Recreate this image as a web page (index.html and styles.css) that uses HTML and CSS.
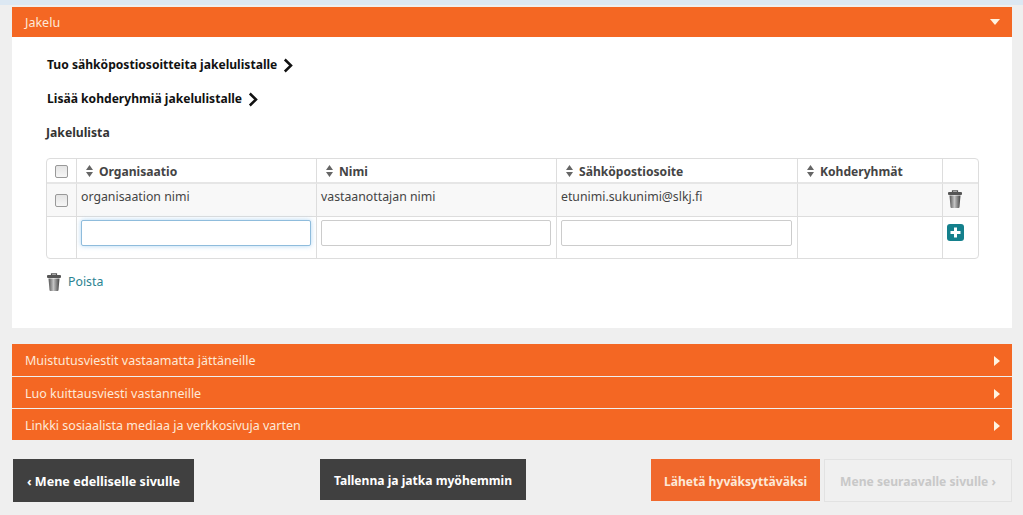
FILE: index.html
```html
<!DOCTYPE html>
<html>
<head>
    <meta charset="UTF-8">
    <title>Jakelu</title>
    <link rel="stylesheet" href="styles.css">
</head>
<body>
    <div class="top-strip"></div>
    <div class="page">
        <div class="bar bar-open">
            <span>Jakelu</span>
            <svg class="caret" width="10" height="6" viewBox="0 0 10 6"><path d="M0 0h10L5 6z"/></svg>
        </div>
        <div class="panel">
            <a class="link-head link-first">Tuo sähköpostiosoitteita jakelulistalle
                <svg class="chevron" width="10" height="15" viewBox="0 0 10 15"><path d="M1.800 1.500 8 7.500l-6.200 6" /></svg>
            </a>
            <a class="link-head link-second">Lisää kohderyhmiä jakelulistalle
                <svg class="chevron" width="10" height="15" viewBox="0 0 10 15"><path d="M1.800 1.500 8 7.500l-6.200 6" /></svg>
            </a>
            <h4>Jakelulista</h4>
            <table class="list">
                <colgroup>
                    <col class="col-check">
                    <col class="col-org">
                    <col class="col-name">
                    <col class="col-mail">
                    <col class="col-group">
                    <col class="col-action">
                </colgroup>
                <thead>
                    <tr>
                        <th class="cell-check"><span class="checkbox"></span></th>
                        <th><svg class="sort" width="7" height="12" viewBox="0 0 7 12"><path d="M3.500 0 7 5H0zM0 7h7l-3.500 5z"/></svg>Organisaatio</th>
                        <th><svg class="sort" width="7" height="12" viewBox="0 0 7 12"><path d="M3.500 0 7 5H0zM0 7h7l-3.500 5z"/></svg>Nimi</th>
                        <th><svg class="sort" width="7" height="12" viewBox="0 0 7 12"><path d="M3.500 0 7 5H0zM0 7h7l-3.500 5z"/></svg>Sähköpostiosoite</th>
                        <th><svg class="sort" width="7" height="12" viewBox="0 0 7 12"><path d="M3.500 0 7 5H0zM0 7h7l-3.500 5z"/></svg>Kohderyhmät</th>
                        <th></th>
                    </tr>
                </thead>
                <tbody>
                    <tr class="row-data">
                        <td class="cell-check"><span class="checkbox"></span></td>
                        <td>organisaation nimi</td>
                        <td>vastaanottajan nimi</td>
                        <td>etunimi.sukunimi@slkj.fi</td>
                        <td></td>
                        <td class="cell-action">
                            <svg class="trash" width="16" height="18" viewBox="0 0 16 18"><use href="#trash-icon"/></svg>
                        </td>
                    </tr>
                    <tr class="row-input">
                        <td></td>
                        <td><input type="text" class="focused"></td>
                        <td><input type="text"></td>
                        <td><input type="text"></td>
                        <td></td>
                        <td class="cell-action cell-add">
                            <svg class="add" width="17" height="17" viewBox="0 0 17 17"><rect width="17" height="17" rx="3" fill="#14808c"/><path d="M8.500 3.500v10M3.500 8.500h10" stroke="#fff" stroke-width="3"/></svg>
                        </td>
                    </tr>
                </tbody>
            </table>
            <div class="remove">
                <svg class="trash" width="16" height="18" viewBox="0 0 16 18"><use href="#trash-icon"/></svg>
                <a>Poista</a>
            </div>
        </div>

        <div class="bars">
            <div class="bar bar-tall"><span>Muistutusviestit vastaamatta jättäneille</span><svg class="caret" width="6" height="10" viewBox="0 0 6 10"><path d="M0 0l6 5-6 5z"/></svg></div>
            <div class="bar"><span>Luo kuittausviesti vastanneille</span><svg class="caret" width="6" height="10" viewBox="0 0 6 10"><path d="M0 0l6 5-6 5z"/></svg></div>
            <div class="bar"><span>Linkki sosiaalista mediaa ja verkkosivuja varten</span><svg class="caret" width="6" height="10" viewBox="0 0 6 10"><path d="M0 0l6 5-6 5z"/></svg></div>
        </div>

        <div class="actions">
            <button type="button" class="btn btn-dark btn-prev">‹ Mene edelliselle sivulle</button>
            <button type="button" class="btn btn-dark btn-save">Tallenna ja jatka myöhemmin</button>
            <div class="actions-right">
                <button type="button" class="btn btn-orange">Lähetä hyväksyttäväksi</button>
                <button type="button" class="btn btn-disabled">Mene seuraavalle sivulle ›</button>
            </div>
        </div>
    </div>

    <svg class="defs" width="0" height="0">
        <defs>
            <linearGradient id="trash-fill" x1="0" x2="1" y1="0" y2="0">
                <stop offset="0" stop-color="#555"/>
                <stop offset="0.45" stop-color="#c4c4c4"/>
                <stop offset="1" stop-color="#444"/>
            </linearGradient>
            <symbol id="trash-icon" viewBox="0 0 16 18">
                <path d="M5.500 2V.8h5V2" fill="none" stroke="#555" stroke-width="1.200"/>
                <rect x="1" y="2" width="14" height="3" rx="1" fill="#555"/>
                <path d="M2.500 5.500h11l-1 11.500a1 1 0 0 1-1 1h-7a1 1 0 0 1-1-1z" fill="url(#trash-fill)"/>
            </symbol>
        </defs>
    </svg>
</body>
</html>
```

FILE: styles.css
```css
html, body {
    margin: 0;
    padding: 0;
}
body {
    font-family: "Noto Sans", "Open Sans", sans-serif;
    font-size: 12.500px;
    background-color: #efefef;
    color: #444;
    height: 515px;
    overflow: hidden;
}
.top-strip {
    height: 6px;
    background: #dce8f3;
    border-bottom: 1px solid #efefef;
    box-sizing: border-box;
}
.page {
    padding: 1px 11px 0 12px;
}
.defs {
    position: absolute;
}
.bar {
    display: flex;
    align-items: center;
    justify-content: space-between;
    height: 31px;
    padding: 2px 12px 0 13px;
    background: #f46723;
    color: #fde9d8;
    box-sizing: border-box;
}
.bar-open {
    height: 30px;
    padding-top: 0;
}
.caret path {
    fill: #fff3e0;
}
.panel {
    height: 291px;
    padding: 0 34px;
    background: #fff;
    box-sizing: border-box;
    overflow: hidden;
}
.link-head {
    display: flex;
    align-items: center;
    gap: 6px;
    font-size: 12.100px;
    font-weight: bold;
    color: #111;
    line-height: 18px;
    padding-left: 1px;
}
.link-first {
    padding-top: 19px;
}
.link-second {
    padding-top: 16px;
}
.chevron path {
    fill: none;
    stroke: #111;
    stroke-width: 2.500;
}
h4 {
    margin: 16px 0 0;
    font-size: 12.200px;
    line-height: 18px;
    color: #333;
}
.list {
    margin-top: 16px;
    width: 933px;
    table-layout: fixed;
    border-collapse: separate;
    border-spacing: 0;
    border: 1px solid #ddd;
    border-radius: 4px;
}
.col-check { width: 29px; }
.col-org { width: 240px; }
.col-name { width: 240px; }
.col-mail { width: 241px; }
.col-group { width: 145px; }
.list th, .list td {
    padding: 0 5px 0 4px;
    border-left: 1px solid #ddd;
    text-align: left;
}
.list th:first-child, .list td:first-child {
    border-left: none;
}
.list th {
    height: 25px;
    font-size: 12.100px;
    font-weight: bold;
    color: #444;
    border-bottom: 2px solid #e6e6e6;
    box-sizing: border-box;
    padding: 2px 0 0 9px;
}
.row-data td {
    height: 33px;
    font-size: 12.300px;
    background: #f8f8f8;
    border-bottom: 1px solid #ddd;
    box-sizing: border-box;
    vertical-align: top;
    padding-top: 4px;
}
.row-input td {
    height: 41px;
    box-sizing: border-box;
    vertical-align: top;
    padding-top: 3px;
}
.cell-check {
    text-align: center !important;
}
.list td.cell-check {
    padding: 7px 0 0 0;
}
.list th.cell-check {
    padding: 0;
}
.list td.cell-action {
    padding-left: 4px;
    padding-top: 6px;
}
.list td.cell-add {
    padding-top: 7px;
}
.checkbox {
    display: inline-block;
    width: 11px;
    height: 11px;
    border: 1px solid #999;
    border-radius: 2px;
    background: linear-gradient(#e4e4e4, #f6f6f6);
    vertical-align: middle;
}
.sort {
    margin-right: 6px;
    vertical-align: -1px;
}
.sort path {
    fill: #666;
}
input {
    display: block;
    width: 100%;
    height: 26px;
    padding: 0 6px;
    border: 1px solid #ccc;
    border-radius: 2px;
    background: #fff;
    box-sizing: border-box;
}
input.focused {
    border-color: #8fbcdc;
    box-shadow: 0 0 5px rgba(102, 175, 233, 0.5);
}
.remove {
    display: flex;
    align-items: center;
    gap: 6px;
    margin-top: 12px;
    line-height: 20px;
    font-size: 12.300px;
}
.remove a {
    color: #2b8391;
    padding-top: 1px;
}
.bars {
    margin-top: 16px;
    display: flex;
    flex-direction: column;
    gap: 1px;
}
.bars .bar-tall {
    height: 32px;
    padding-top: 1px;
}
.actions {
    display: flex;
    align-items: flex-start;
    margin-top: 19px;
}
.btn {
    height: 43px;
    border: none;
    font-family: inherit;
    font-size: 12.100px;
    font-weight: bold;
    padding: 2px 0 0;
    box-sizing: border-box;
}
.btn-dark {
    background: #404040;
    color: #fff;
}
.btn-prev {
    width: 181px;
    margin-left: 1px;
    font-size: 12.600px;
}
.btn-save {
    width: 206px;
    height: 41px;
    margin-left: 126px;
}
.actions-right {
    display: flex;
    gap: 4px;
    margin-left: auto;
}
.btn-orange {
    width: 169px;
    height: 42px;
    background: #f0682c;
    color: #fde9d8;
}
.btn-disabled {
    width: 188px;
    background: #f0f0f0;
    border: 1px solid #e2e2e2;
    color: #c8c8c8;
}
```
